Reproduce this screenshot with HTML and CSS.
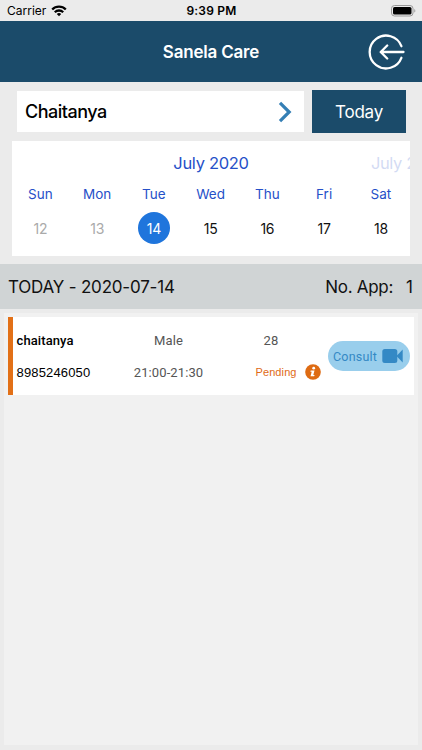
FILE: index.html
```html
<!DOCTYPE html>
<html lang="en">
<head>
<meta charset="utf-8">
<title>Sanela Care</title>
<link rel="stylesheet" href="styles.css">
</head>
<body>
<div class="status">
  <div class="carrier"><span>Carrier</span>
    <svg width="16" height="12" viewBox="0 0 16 12" fill="none" stroke="#000" stroke-width="2.3"><path d="M1.2 4.5a9.6 9.6 0 0 1 13.6 0M3.8 7.2a6 6 0 0 1 8.4 0"/><path d="M8 11.3 5.8 9.1a3.1 3.1 0 0 1 4.4 0Z" fill="#000" stroke="none"/></svg>
  </div>
  <div class="clock">9:39 PM</div>
  <svg class="battery" width="25" height="12" viewBox="0 0 25 12"><rect x=".5" y=".5" width="21.5" height="10.5" rx="3" fill="none" stroke="#999"/><rect x="2" y="2" width="18.5" height="7.5" rx="1.6"/><path d="M23.3 4v3.6c1.4-.5 1.4-3.1 0-3.6Z" fill="#999"/></svg>
</div>
<header class="header">
  <h1>Sanela Care</h1>
  <svg class="logout" width="38" height="38" viewBox="0 0 38 38" fill="none" stroke="#fff" stroke-width="2.3" stroke-linecap="round" stroke-linejoin="round"><path d="M33.4 13.2A16.4 16.4 0 1 0 33.4 24.8M35.5 19H13M19.2 12.5 12.7 19l6.5 6.5"/></svg>
</header>
<div class="controls">
  <div class="picker"><span>Chaitanya</span>
    <svg width="14" height="22" viewBox="0 0 14 22" fill="none" stroke="#347fb5" stroke-width="3.2"><path d="m2 1.8 9.2 9.2L2 20.2"/></svg>
  </div>
  <button class="today">Today</button>
</div>
<section class="calendar">
  <div class="months"><span class="month">July 2020</span><span class="next">July 2020</span></div>
  <div class="week days"><span>Sun</span><span>Mon</span><span>Tue</span><span>Wed</span><span>Thu</span><span>Fri</span><span>Sat</span></div>
  <div class="week dates"><span class="past">12</span><span class="past">13</span><span class="selected">14</span><span>15</span><span>16</span><span>17</span><span>18</span></div>
</section>
<div class="summary"><span class="date">TODAY - 2020-07-14</span><span class="label">No. App:</span><span class="count">1</span></div>
<main class="list">
  <article class="card">
    <div class="info">
      <span class="name">chaitanya</span><span class="mid">Male</span><span class="age">28</span>
      <span class="phone">8985246050</span><span class="mid time">21:00-21:30</span>
      <span class="state"><span class="pending">Pending</span>
        <svg width="16" height="16" viewBox="0 0 16 16"><circle cx="8" cy="8" r="7.8" fill="#de6b13"/><circle cx="8.7" cy="4.2" r="1.4" fill="#fff"/><path d="M5.7 6.5h3.8L8.3 11h1.3l-.4 1.3H5.5L6.7 7.8H5.4Z" fill="#fff"/></svg>
      </span>
    </div>
    <button class="consult"><span>Consult</span>
      <svg width="22" height="16" viewBox="0 0 22 16" fill="#3489c5"><rect x=".3" y="1" width="15" height="14" rx="2.5"/><path d="m14.5 8 6.2-6.6v13.2Z"/></svg>
    </button>
  </article>
</main>
</body>
</html>
```
FILE: styles.css
```css
* { box-sizing: border-box; }
body { margin: 0; width: 422px; height: 750px; overflow: hidden; display: flex; flex-direction: column; background: #ebebeb; font-family: Inter, sans-serif; color: #000; }
svg { display: block; flex: none; }
button { border: 0; padding: 0; font-family: inherit; }
.status { height: 21px; display: grid; grid-template-columns: 1fr auto 1fr; align-items: center; padding: 0 6px 0 7px; font-size: 12px; }
.carrier { display: flex; align-items: center; gap: 5px; }
.clock { font-weight: 600; font-size: 12px; letter-spacing: .2px; }
.battery { justify-self: end; }
.header { height: 61px; background: #1b4b6a; display: grid; grid-template-columns: 1fr auto 1fr; align-items: center; padding-right: 16px; padding-left: 16px; color: #fff; }
h1 { grid-column: 2; margin: 0; font-size: 17px; font-weight: 600; letter-spacing: -.2px; }
.logout { justify-self: end; }
.controls { height: 59px; display: flex; align-items: center; gap: 8px; padding: 0 16px 0 17px; }
.picker { width: 287px; height: 41px; background: #fff; display: flex; align-items: center; justify-content: space-between; padding: 0 12px 0 8px; font-size: 18px; font-weight: 500; letter-spacing: -.5px; }
.today { width: 94px; height: 43px; background: #1b4b6a; color: #fff; font-size: 17px; letter-spacing: -.2px; }
.calendar { height: 115px; margin: 0 12px; background: #fff; overflow: hidden; padding-top: 11px; color: #2650c8; }
.months { display: grid; grid-template-columns: 1fr auto 1fr; height: 23px; line-height: 23px; font-size: 16.5px; white-space: nowrap; }
.month { grid-column: 2; letter-spacing: -.3px; }
.next { width: 39px; overflow: hidden; justify-self: end; opacity: .2; letter-spacing: -.4px; }
.week { display: grid; grid-template-columns: repeat(7, 56.75px); justify-items: center; align-items: center; }
.days { height: 38px; font-size: 13.5px; }
.dates { height: 28px; font-size: 14px; color: #111; letter-spacing: -.2px; }
.past { color: #aaa; }
.selected { width: 32px; height: 32px; border-radius: 50%; background: #1f75dc; color: #fff; display: grid; place-items: center; }
.dates { margin-top: -1px; }
.summary { height: 45px; margin-top: 8px; flex: none; display: flex; align-items: center; padding: 0 7px 0 8px; background: #d0d4d5; font-size: 17px; color: #111; }
.date { margin-right: auto; letter-spacing: -.2px; }
.label { letter-spacing: -.3px; }
.count { width: 9px; margin-left: 13px; }
.list { margin: 4px 4px 5px; flex: 1; background: #f1f1f1; padding: 4px; }
.card { height: 78px; border-left: 5px solid #e27017; background: #fff; display: flex; align-items: center; justify-content: space-between; padding: 0 4px 0 3.5px; font-family: Roboto, sans-serif; font-size: 13px; }
.info { display: grid; grid-template-columns: 76px 152px 77px; grid-template-rows: 32px 32px; align-items: center; }
.name { font-weight: 500; letter-spacing: .1px; }
.mid, .age { color: #555; justify-self: center; letter-spacing: .1px; }
.age { margin-right: 24px; }
.phone { font-family: "Liberation Sans", sans-serif; letter-spacing: .15px; }
.state { display: flex; align-items: center; gap: 8px; margin-left: 11px; color: #e06a16; }
.pending { font: 11px "Liberation Sans", sans-serif; letter-spacing: .1px; }
.consult { width: 82px; height: 30px; flex: none; border-radius: 15px; background: #99ceec; color: #3489c5; display: flex; align-items: center; justify-content: space-between; padding: 0 6px 0 5px; font-size: 12.5px; letter-spacing: .2px; }
```
